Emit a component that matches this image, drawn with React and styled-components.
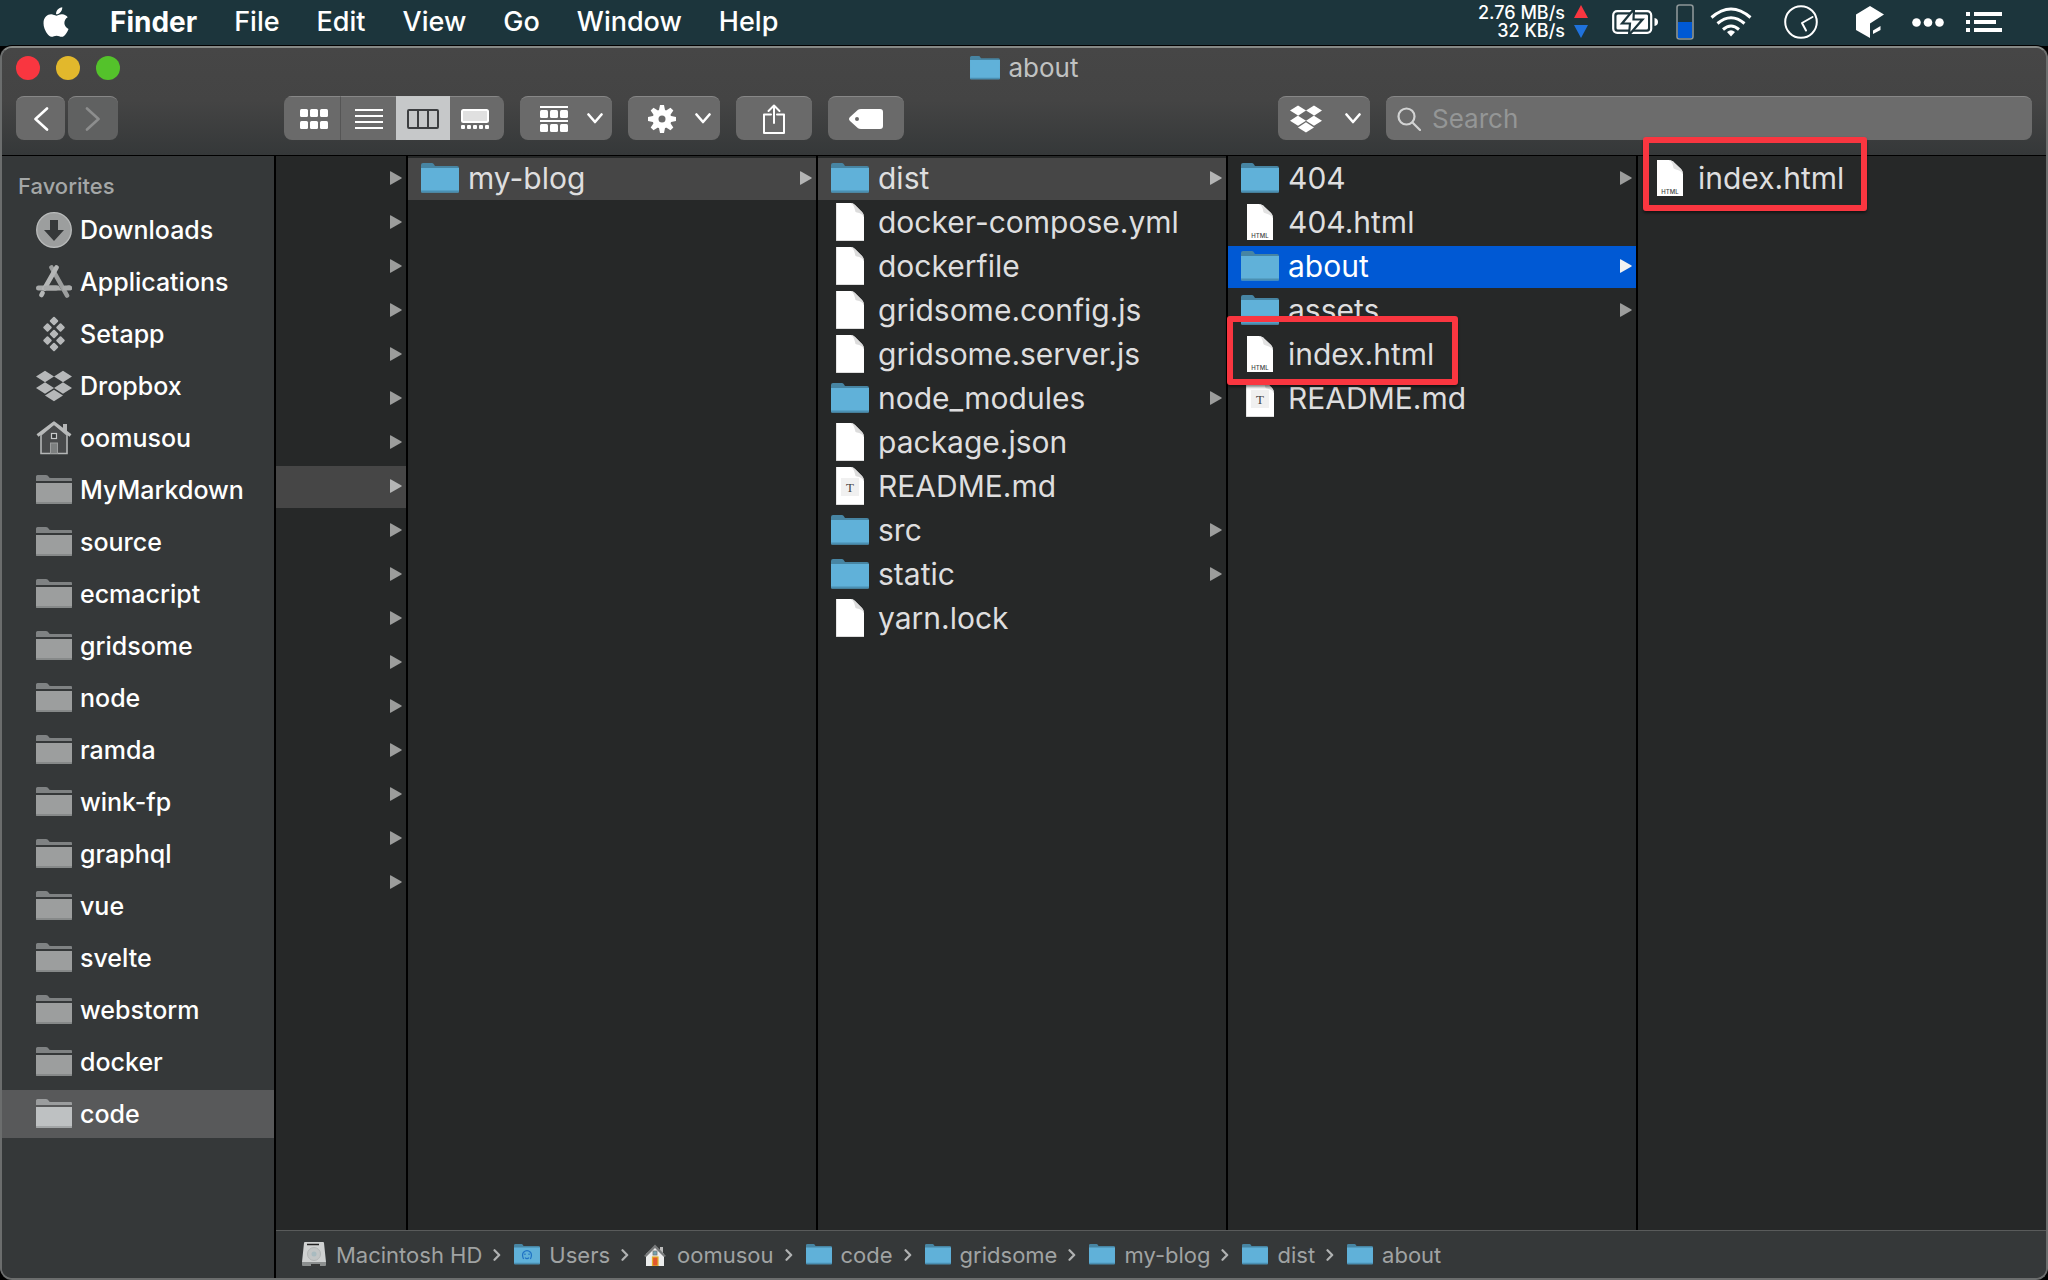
import React from "react";
import styled, { createGlobalStyle } from "styled-components";
import { FaApple, FaDropbox } from "react-icons/fa";

const GlobalStyle = createGlobalStyle`
  *, *::before, *::after { box-sizing: border-box; }
  body {
    margin: 0;
    background: #000;
    color: #fff;
    font-family: Inter, Roboto, "Liberation Sans", sans-serif;
    -webkit-font-smoothing: antialiased;
  }
  ul, ol { margin: 0; padding: 0; list-style: none; }
  button { border: 0; margin: 0; padding: 0; background: none; color: inherit; font: inherit; text-align: left; }
  a { color: inherit; text-decoration: none; }
  svg { display: block; flex: none; }
`;

const Desktop = styled.div`
  display: flex;
  flex-direction: column;
  min-height: 100vh;
`;

/* ---------- menu bar ---------- */

const MenuBar = styled.header`
  display: flex;
  align-items: center;
  justify-content: space-between;
  height: 46px;
  padding: 0 46px 2px 39px;
  background: #1c353c;
`;

const Menus = styled.nav`
  display: flex;
  align-items: center;
  gap: 37px;
`;

const MenuButton = styled.button`
  font-size: ${(p) => (p.$strong ? 28 : 27)}px;
  line-height: 32px;
  font-weight: ${(p) => (p.$strong ? 700 : 500)};
`;

const StatusItems = styled.div`
  display: flex;
  align-items: center;
`;

const StatusIcon = styled.span`
  display: flex;
  margin-left: ${(p) => p.$gap}px;
`;

const NetSpeed = styled.div`
  font-size: 18px;
  line-height: 18px;
  font-weight: 500;
  text-align: right;
`;

/* ---------- window ---------- */

const Window = styled.main`
  flex: 1;
  display: flex;
  flex-direction: column;
  border: 2px solid #6b6d6d;
  border-top-color: #868986;
  border-radius: 12px;
  background: #353839;
  box-shadow: 0 0 0 1px #000;
`;

const TitleArea = styled.div`
  padding: 2px 14px 15px;
  border-bottom: 1px solid #000;
  border-radius: 10px 10px 0 0;
  background: linear-gradient(#464646, #444 50%, #353839);
`;

const TitleRow = styled.div`
  display: grid;
  grid-template-columns: 1fr auto 1fr;
  align-items: center;
  height: 36px;
`;

const Lights = styled.div`
  display: flex;
  gap: 16px;
`;

const Light = styled.button`
  width: 24px;
  height: 24px;
  border-radius: 50%;
  background: ${(p) => p.$color};
`;

const Title = styled.h1`
  display: flex;
  align-items: center;
  gap: 9px;
  margin: 0;
  font-size: 26px;
  line-height: 32px;
  font-weight: 400;
  color: #c0c2c2;
`;

const Toolbar = styled.div`
  display: flex;
  gap: 16px;
  margin-top: 10px;
`;

const NavButtons = styled.div`
  display: flex;
  gap: 3px;
  margin-right: 150px;
`;

const Segments = styled.div`
  display: flex;
  overflow: hidden;
  border-radius: 8px;
`;

const ToolButton = styled.button`
  display: flex;
  align-items: center;
  justify-content: center;
  width: ${(p) => p.$width}px;
  height: 44px;
  border-top: 1px solid #878787;
  border-radius: 8px;
  background: ${(p) => (p.$dim ? "#606161" : "#6a6a6a")};
  color: ${(p) => (p.$dim ? "#8d8e8e" : "#fff")};
`;

const MenuToolButton = styled(ToolButton)`
  justify-content: space-between;
  padding: 0 9px 0 ${(p) => p.$inset}px;
`;

const SegmentButton = styled(ToolButton)`
  border-radius: 0;
  ${(p) => p.$edge === "start" && "padding-left: 4px; border-right: 1px solid #555;"}
  ${(p) => p.$edge === "end" && "padding-right: 4px;"}
  ${(p) => p.$active && "background: #c6c8c9; border-top-color: #c6c8c9;"}
`;

const Spacer = styled.div`
  flex: 1;
`;

const Search = styled.label`
  display: flex;
  align-items: center;
  gap: 11px;
  width: 646px;
  height: 44px;
  padding: 0 11px;
  border-top: 1px solid #878787;
  border-radius: 8px;
  background: #6c6c6c;
`;

const SearchInput = styled.input`
  flex: 1;
  min-width: 0;
  padding: 0;
  border: 0;
  outline: 0;
  background: none;
  color: #fff;
  font: inherit;
  font-size: 26px;
  line-height: 32px;
  &::placeholder { color: #949696; opacity: 1; }
`;

const Body = styled.div`
  flex: 1;
  display: flex;
`;

/* ---------- sidebar ---------- */

const Sidebar = styled.aside`
  width: 274px;
  flex: none;
  padding-top: 16px;
  border-right: 2px solid #000;
  background: #353839;
  border-radius: 0 0 0 10px;
`;

const SidebarHeading = styled.h2`
  margin: 0 0 6px;
  padding-left: 16px;
  font-size: 22px;
  line-height: 28px;
  font-weight: 500;
  color: #a4a7a7;
`;

const SidebarList = styled.ul`
  display: flex;
  flex-direction: column;
  gap: 4px;
`;

const SidebarItem = styled.button`
  display: flex;
  align-items: center;
  gap: 8px;
  width: 100%;
  height: 48px;
  padding-left: 34px;
  font-size: 25px;
  font-weight: 500;
  color: #fff;
  background: ${(p) => (p.$active ? "#58595a" : "transparent")};
`;

/* ---------- column browser ---------- */

const Browser = styled.section`
  flex: 1;
  min-width: 0;
  display: flex;
  flex-direction: column;
`;

const Columns = styled.div`
  flex: 1;
  display: flex;
  background: #262828;
`;

const Column = styled.ul`
  display: flex;
  flex-direction: column;
  gap: 2px;
  padding-top: 2px;
  ${(p) => (p.$width ? `width: ${p.$width}px; flex: none; border-right: 2px solid #000;` : "flex: 1; min-width: 0;")}
`;

const rowColors = { trail: "#464646", selected: "#0059d4" };

const Row = styled.li`
  position: relative;
`;

const RowButton = styled.button`
  display: flex;
  align-items: center;
  gap: 9px;
  width: 100%;
  height: 42px;
  padding: 0 4px 3px 13px;
  font-size: 30px;
  line-height: 38px;
  color: ${(p) => (p.$state === "selected" ? "#fff" : "#dededf")};
  background: ${(p) => rowColors[p.$state] || "transparent"};
`;

const IconSlot = styled.span`
  display: flex;
  justify-content: center;
  width: 38px;
  flex: none;
`;

const RowName = styled.span`
  flex: 1;
`;

/* Red frame drawn over a file to point it out. */
const Highlight = styled.span`
  position: absolute;
  top: ${(p) => p.$top}px;
  left: ${(p) => p.$left}px;
  width: ${(p) => p.$width}px;
  height: ${(p) => p.$height}px;
  border: 6px solid #f93640;
  border-radius: 3px;
  box-shadow: 0 2px 3px rgba(0, 0, 0, 0.5);
  pointer-events: none;
  z-index: 1;
`;

/* ---------- path bar ---------- */

const PathBar = styled.nav`
  height: 48px;
  padding-left: 25px;
  border-top: 1px solid #595b5b;
  background: #353839;
  border-radius: 0 0 10px 0;
`;

const PathList = styled.ol`
  display: flex;
  align-items: center;
  height: 100%;
`;

const PathItem = styled.li`
  display: flex;
  align-items: center;
  gap: 11px;
  margin-right: 13px;
`;

const PathLink = styled.a`
  display: flex;
  align-items: center;
  gap: 9px;
  font-size: 22px;
  line-height: 28px;
  color: #a0a3a3;
`;

const PathIcon = styled.span`
  display: flex;
  justify-content: center;
  width: 26px;
`;

/* ---------- drawings ---------- */

const BlueFolder = ({ width = 38, children }) => (
  <svg width={width} height={width * (30 / 38)} viewBox="0 0 38 30" aria-hidden="true">
    <path d="M0 2Q0 0 2 0H11Q12.500 0 13 1.500L14 3H36Q38 3 38 5V12H0Z" fill="#4785a3" />
    <path d="M0 5H38V28.500Q38 29.500 37 29.500H1Q0 29.500 0 28.500Z" fill="#60b1d9" />
    <path d="M0 27.500H38V28.500Q38 29.500 37 29.500H1Q0 29.500 0 28.500Z" fill="#4a8fb2" />
    {children}
  </svg>
);

const GreyFolder = ({ active }) => (
  <svg width="36" height="30" viewBox="0 0 36 30" aria-hidden="true">
    <path d="M0 1.500Q0 0 1.500 0H10Q12 0 12.500 1.500Q13 3 15 3H35Q36 3 36 4V6H0Z" fill={active ? "#9b9d9e" : "#7f8283"} />
    <path d="M0 8H36V27.500Q36 29 34.500 29H1.500Q0 29 0 27.500Z" fill={active ? "#bec1c2" : "#9c9e9e"} />
    <path d="M0 27H36V27.500Q36 29 34.500 29H1.500Q0 29 0 27.500Z" fill={active ? "#a2a5a6" : "#868989"} />
  </svg>
);

const Doc = ({ mark }) => (
  <svg width="28" height="38" viewBox="0 0 28 38" aria-hidden="true">
    <path d="M0 0H15Q17 0 19 2L26 9Q28 11 28 14V38H0Z" fill="#fff" />
    <path d="M15 0Q17 0 19 2L26 9Q28 11 28 14Q26 10 21 9.500Q19 9.500 19 7Q18 2 15 0Z" fill="#dcdcdc" />
    <path d="M0 37.500H28M.25 0V38" stroke="#bbb" strokeWidth=".5" />
    {mark && (
      <>
        <rect x="5" y="11" width="18" height="18" fill="#f0f0f0" />
        <text x="14" y="25" textAnchor="middle" fontFamily="Liberation Serif, serif" fontSize="13" fill="#444">T</text>
      </>
    )}
  </svg>
);

const HtmlDoc = () => (
  <svg width="26" height="36" viewBox="0 0 26 36" aria-hidden="true">
    <path d="M0 0H12Q14 0 16 1.500L24 9Q26 11 26 14V36H0Z" fill="#fff" />
    <path d="M12 0Q14 0 16 1.500L24 9Q26 11 26 14Q24 10.500 19 9.500Q16 9 16 6Q15.500 2 12 0Z" fill="#e2e2e2" />
    <text x="13" y="34" textAnchor="middle" fontFamily="Inter, sans-serif" fontWeight="500" fontSize="6" fill="#444">HTML</text>
  </svg>
);

const Arrow = ({ color }) => (
  <svg width="12" height="14" viewBox="0 0 12 14" aria-hidden="true">
    <path d="M0 .5Q0 0 1 .4L11.500 6.400Q12 7 11.500 7.600L1 13.600Q0 14 0 13.500Z" fill={color} />
  </svg>
);

const Chevron = () => (
  <svg width="16" height="11" viewBox="0 0 16 11" fill="none" stroke="currentColor" strokeWidth="2.6" strokeLinecap="round" strokeLinejoin="round" aria-hidden="true">
    <path d="M1.500 1.500L8 9L14.500 1.500" />
  </svg>
);

const BackIcon = ({ flip }) => (
  <svg width="16" height="24" viewBox="0 0 16 24" fill="none" stroke="currentColor" strokeWidth="2.6" strokeLinecap="round" strokeLinejoin="round" aria-hidden="true">
    <path d={flip ? "M2 1.500L13.500 12L2 22.500" : "M14 1.500L2.500 12L14 22.500"} />
  </svg>
);

const GridIcon = () => (
  <svg width="28" height="20" viewBox="0 0 28 20" fill="#fff" aria-hidden="true">
    {[0, 12].map((y) => [0, 10, 20].map((x) => <rect key={`${x}-${y}`} x={x} y={y} width="8" height="8" rx="1.500" />))}
  </svg>
);

const ListIcon = () => (
  <svg width="28" height="20" viewBox="0 0 28 20" fill="#fff" aria-hidden="true">
    {[0, 6, 12, 18].map((y) => <rect key={y} y={y} width="28" height="2" />)}
  </svg>
);

const ColumnsIcon = () => (
  <svg width="32" height="20" viewBox="0 0 32 20" fill="none" stroke="#3c3e40" strokeWidth="2" aria-hidden="true">
    <rect x="1" y="1" width="30" height="18" rx="1" />
    <path d="M11 1V19M21 1V19" />
  </svg>
);

const GalleryIcon = () => (
  <svg width="28" height="20" viewBox="0 0 28 20" fill="#fff" aria-hidden="true">
    <rect x="1" y="1" width="26" height="12" rx="1.500" fill="#e0e0e0" stroke="#fff" strokeWidth="2" />
    {[0, 6, 12, 18, 24].map((x) => <rect key={x} x={x} y="16" width="4" height="4" rx="1" />)}
  </svg>
);

const GroupIcon = () => (
  <svg width="28" height="26" viewBox="0 0 28 26" fill="#fff" aria-hidden="true">
    <rect width="28" height="2" />
    <rect y="14" width="28" height="2" />
    {[4, 18].map((y) => [0, 10, 20].map((x) => <rect key={`${x}-${y}`} x={x} y={y} width="8" height="8" rx="1.500" />))}
  </svg>
);

const GearIcon = () => (
  <svg width="28" height="28" viewBox="-14 -14 28 28" aria-hidden="true">
    {[0, 45, 90, 135].map((a) => (
      <path key={a} d="M-2 -14H2L3.200 -8V8L2 14H-2L-3.200 8V-8Z" transform={`rotate(${a})`} fill="#fff" />
    ))}
    <circle r="9.500" fill="#fff" />
    <circle r="3.500" fill="#6a6a6a" />
  </svg>
);

const ShareIcon = () => (
  <svg width="24" height="30" viewBox="0 0 24 30" fill="none" stroke="#fff" strokeWidth="2" strokeLinejoin="round" strokeLinecap="round" aria-hidden="true">
    <path d="M9 10.500H2V29H22V10.500H15M12 19V1.500M6.500 7L12 1.500L17.500 7" />
  </svg>
);

const TagIcon = () => (
  <svg width="34" height="20" viewBox="0 0 34 20" aria-hidden="true">
    <path fillRule="evenodd" d="M9 .8Q10 0 12 0H31Q34 0 34 3V17Q34 20 31 20H12Q10 20 9 19.200L1 12Q-1 10 1 8ZM8 8A2 2 0 1 0 8 12A2 2 0 1 0 8 8Z" fill="#fff" />
  </svg>
);

const SearchIcon = () => (
  <svg width="24" height="24" viewBox="0 0 24 24" fill="none" stroke="#d2d3d3" strokeWidth="2.200" strokeLinecap="round" aria-hidden="true">
    <circle cx="9.500" cy="9.500" r="8" />
    <path d="M15.500 15.500L23 23" />
  </svg>
);

const DownloadsIcon = () => (
  <svg width="36" height="36" viewBox="0 0 36 36" aria-hidden="true">
    <circle cx="18" cy="18" r="17.300" fill="#9c9e9e" stroke="#b9bbbb" strokeWidth="1.300" />
    <path d="M14 8H22V18H28L18 29L8 18H14Z" fill="#353839" />
  </svg>
);

const ApplicationsIcon = () => (
  <svg width="36" height="34" viewBox="0 0 36 34" fill="none" strokeLinecap="round" aria-hidden="true">
    <path d="M2.500 23H33.500" stroke="#a8aaaa" strokeWidth="5" />
    <path d="M16 3L33 30" stroke="#353839" strokeWidth="7.500" strokeLinecap="butt" />
    <path d="M15.500 2.500L31 30.500" stroke="#9c9e9e" strokeWidth="4.600" />
    <path d="M20.500 2.500L8.500 23.500M6.500 28L5.500 30" stroke="#b4b6b6" strokeWidth="4.600" />
    <path d="M10 23H20M29 23H33.500" stroke="#a8aaaa" strokeWidth="5" />
  </svg>
);

const SetappIcon = () => (
  <svg width="36" height="36" viewBox="0 0 36 36" fill="#b6b8b9" aria-hidden="true">
    {[[18, 5], [11.500, 11.500], [24.500, 11.500], [18, 18], [11.500, 24.500], [24.500, 24.500], [18, 31]].map(([x, y]) => (
      <rect key={`${x}-${y}`} x={x - 3.300} y={y - 3.300} width="6.600" height="6.600" rx="1" transform={`rotate(45 ${x} ${y})`} />
    ))}
  </svg>
);

const HomeIcon = () => (
  <svg width="36" height="34" viewBox="0 0 36 34" aria-hidden="true">
    <rect x="27" y="3" width="4" height="9" fill="#b4b6b6" />
    <path d="M5 14L18 3L31 14V32.500H5Z" fill="#484a4b" stroke="#b4b6b6" strokeWidth="1.600" />
    <rect x="14.500" y="22" width="7" height="10.500" fill="#7c7f7f" stroke="#9c9e9e" />
    <rect x="15.500" y="12.500" width="5" height="5" fill="#353839" stroke="#c8caca" strokeWidth="1.200" />
    <path d="M1.500 14.500L18 2L34.500 14.500" fill="none" stroke="#b8baba" strokeWidth="3.200" strokeLinejoin="round" />
  </svg>
);

const DiskIcon = () => (
  <svg width="24" height="25" viewBox="0 0 24 25" aria-hidden="true">
    <path d="M2 1Q2 0 3 0H21Q22 0 22 1L24 20H0Z" fill="#cfd1d1" />
    <path d="M0 20H24V23Q24 24 23 24H1Q0 24 0 23Z" fill="#8c8f8f" />
    <path d="M5 2.500H17" stroke="#222" strokeWidth="1.500" />
    <circle cx="12" cy="12" r="6.500" fill="#c2c5c5" stroke="#b2b5b5" />
    <circle cx="12" cy="12" r="2.500" fill="#a9bbc0" />
    <path d="M9 23H18" stroke="#1c1c1c" strokeWidth="1.500" />
  </svg>
);

const ColorHomeIcon = () => (
  <svg width="22" height="22" viewBox="0 0 22 22" aria-hidden="true">
    <rect x="16" y="3" width="3" height="6" fill="#bbb" />
    <path d="M2 10L11 2L20 10V22H2Z" fill="#eceded" />
    <path d="M0 12L11 .5L22 12L20 13L11 4L2 13Z" fill="#77797a" />
    <rect x="9" y="7" width="4" height="4" fill="#73a3b0" stroke="#777" strokeWidth=".8" />
    <rect x="8.500" y="13" width="5.500" height="9" fill="#e4572e" stroke="#e3b22b" strokeWidth="1.200" />
  </svg>
);

const PathChevron = () => (
  <svg width="8" height="12" viewBox="0 0 8 12" fill="none" stroke="#b0b2b2" strokeWidth="2.200" strokeLinecap="round" strokeLinejoin="round" aria-hidden="true">
    <path d="M1.500 1.200L6.200 6L1.500 10.800" />
  </svg>
);

const NetArrows = () => (
  <svg width="14" height="34" viewBox="0 0 14 34" aria-hidden="true">
    <path d="M7 0L14 13H0Z" fill="#f93640" />
    <path d="M7 33L14 20H0Z" fill="#1f72dc" />
  </svg>
);

const BatteryIcon = () => (
  <svg width="46" height="26" viewBox="0 0 46 26" aria-hidden="true">
    <rect x="1.200" y="2.200" width="38" height="21.600" rx="4" fill="none" stroke="#fff" strokeWidth="2.200" />
    <rect x="4.500" y="5.500" width="31.500" height="15" rx="1.500" fill="#fff" />
    <path d="M42.500 9Q46 9.500 46 13Q46 16.500 42.500 17Z" fill="#fff" />
    <path d="M22 0L10 14.500H18L17 26L30.500 10.500H21.500Z" fill="#fff" stroke="#1c353c" strokeWidth="2.200" />
  </svg>
);

const GaugeIcon = () => (
  <svg width="18" height="36" viewBox="0 0 18 36" aria-hidden="true">
    <rect x="1" y="1" width="16" height="34" rx="2.500" fill="#1c353c" stroke="#8d9698" strokeWidth="1.600" />
    <rect x="2" y="18" width="14" height="16" fill="#0059d4" />
  </svg>
);

const WifiIcon = () => (
  <svg width="42" height="30" viewBox="0 0 42 30" fill="none" stroke="#fff" strokeWidth="3" aria-hidden="true">
    <path d="M1.500 10.500Q21 -6.500 40.500 10.500M7.500 16.500Q21 5 34.500 16.500M13 22.500Q21 15.500 29 22.500" />
    <path d="M21 29.500L17 25Q21 21.500 25 25Z" fill="#fff" stroke="none" />
  </svg>
);

const ClockIcon = () => (
  <svg width="34" height="34" viewBox="0 0 34 34" fill="none" stroke="#fff" strokeWidth="2" strokeLinecap="round" aria-hidden="true">
    <circle cx="17" cy="17" r="15.800" />
    <path d="M28.500 12L18 18L22 25.500" strokeLinejoin="round" />
  </svg>
);

const CubeIcon = () => (
  <svg width="28" height="32" viewBox="0 0 28 32" fill="#fff" aria-hidden="true">
    <path d="M14 0L28 8.500L14 17.500V32L0 24V8.500Z" />
    <path d="M17 24.500L24.500 20V24L17 28Z" />
  </svg>
);

const DotsIcon = () => (
  <svg width="32" height="9" viewBox="0 0 32 9" fill="#fff" aria-hidden="true">
    <circle cx="4.500" cy="4.500" r="4.300" />
    <circle cx="16" cy="4.500" r="4.300" />
    <circle cx="27.500" cy="4.500" r="4.300" />
  </svg>
);

const NotificationIcon = () => (
  <svg width="36" height="20" viewBox="0 0 36 20" fill="#fff" aria-hidden="true">
    <path d="M0 0H4V4H0ZM8 0H36V4H8ZM0 8H4V12H0ZM8 8H30V12H8ZM0 16H4V20H0ZM8 16H36V20H8Z" />
  </svg>
);

/* ---------- data ---------- */

const menus = ["Finder", "File", "Edit", "View", "Go", "Window", "Help"];

const favorites = [
  ["Downloads", <DownloadsIcon />],
  ["Applications", <ApplicationsIcon />],
  ["Setapp", <SetappIcon />],
  ["Dropbox", <FaDropbox size={36} color="#b6b8b9" />],
  ["oomusou", <HomeIcon />],
  ...["MyMarkdown", "source", "ecmacript", "gridsome", "node", "ramda", "wink-fp", "graphql", "vue", "svelte", "webstorm", "docker", "code"].map((n) => [n]),
];

const columns = [
  { width: 132, rows: Array.from({ length: 17 }, (_, i) => ({ kind: "hidden", open: true, state: i === 7 ? "trail" : undefined })) },
  { width: 410, rows: [{ name: "my-blog", kind: "folder", state: "trail" }] },
  {
    width: 410,
    rows: [
      { name: "dist", kind: "folder", state: "trail" },
      { name: "docker-compose.yml", kind: "doc" },
      { name: "dockerfile", kind: "doc" },
      { name: "gridsome.config.js", kind: "doc" },
      { name: "gridsome.server.js", kind: "doc" },
      { name: "node_modules", kind: "folder" },
      { name: "package.json", kind: "doc" },
      { name: "README.md", kind: "markdown" },
      { name: "src", kind: "folder" },
      { name: "static", kind: "folder" },
      { name: "yarn.lock", kind: "doc" },
    ],
  },
  {
    width: 410,
    rows: [
      { name: "404", kind: "folder" },
      { name: "404.html", kind: "html" },
      { name: "about", kind: "folder", state: "selected" },
      { name: "assets", kind: "folder" },
      { name: "index.html", kind: "html", frame: { top: -18, left: -1, width: 231, height: 69 } },
      { name: "README.md", kind: "markdown" },
    ],
  },
  { rows: [{ name: "index.html", kind: "html", frame: { top: -21, left: 5, width: 224, height: 74 } }] },
];

const fileIcons = {
  folder: <BlueFolder />,
  doc: <Doc />,
  markdown: <Doc mark />,
  html: <HtmlDoc />,
};

const UsersFolder = () => (
  <BlueFolder width={26}>
    <path d="M14 22Q11 16 14 12Q19 7 24 12Q27 16 24 22M16 20Q19 23 22 20M16 14V16M22 14V16" fill="none" stroke="#1f72c4" strokeWidth="1.800" />
  </BlueFolder>
);

const path = [
  ["Macintosh HD", <DiskIcon />],
  ["Users", <UsersFolder />],
  ["oomusou", <ColorHomeIcon />],
  ...["code", "gridsome", "my-blog", "dist", "about"].map((n) => [n, <BlueFolder width={26} />]),
];

const arrowColor = (state) => (state === "selected" ? "#f2f2f2" : state === "trail" ? "#b4b5b5" : "#9c9d9c");

function FileRow({ name, kind, state, frame }) {
  const isFolder = kind === "folder" || kind === "hidden";
  return (
    <Row>
      <RowButton $state={state} aria-label={name || "Folder"}>
        {kind !== "hidden" && <IconSlot>{fileIcons[kind]}</IconSlot>}
        <RowName>{name}</RowName>
        {isFolder && <Arrow color={arrowColor(state)} />}
      </RowButton>
      {frame && <Highlight $top={frame.top} $left={frame.left} $width={frame.width} $height={frame.height} />}
    </Row>
  );
}

export default function App() {
  return (
    <Desktop>
      <GlobalStyle />
      <MenuBar>
        <Menus>
          <MenuButton aria-label="Apple menu"><FaApple size={34} /></MenuButton>
          {menus.map((m) => <MenuButton key={m} $strong={m === "Finder"}>{m}</MenuButton>)}
        </Menus>
        <StatusItems>
          <NetSpeed>
            <div>2.76 MB/s</div>
            <div>32 KB/s</div>
          </NetSpeed>
          <StatusIcon $gap={9}><NetArrows /></StatusIcon>
          <StatusIcon $gap={24}><BatteryIcon /></StatusIcon>
          <StatusIcon $gap={18}><GaugeIcon /></StatusIcon>
          <StatusIcon $gap={16}><WifiIcon /></StatusIcon>
          <StatusIcon $gap={32}><ClockIcon /></StatusIcon>
          <StatusIcon $gap={38}><CubeIcon /></StatusIcon>
          <StatusIcon $gap={28}><DotsIcon /></StatusIcon>
          <StatusIcon $gap={22}><NotificationIcon /></StatusIcon>
        </StatusItems>
      </MenuBar>

      <Window>
        <TitleArea>
          <TitleRow>
            <Lights>
              <Light $color="#f93640" aria-label="Close" />
              <Light $color="#e2b82c" aria-label="Minimize" />
              <Light $color="#54c22b" aria-label="Zoom" />
            </Lights>
            <Title><BlueFolder width={30} />about</Title>
          </TitleRow>
          <Toolbar>
            <NavButtons>
              <ToolButton $width={49} aria-label="Back"><BackIcon /></ToolButton>
              <ToolButton $width={50} $dim aria-label="Forward"><BackIcon flip /></ToolButton>
            </NavButtons>
            <Segments>
              <SegmentButton $width={57} $edge="start" aria-label="Icon view"><GridIcon /></SegmentButton>
              <SegmentButton $width={55} aria-label="List view"><ListIcon /></SegmentButton>
              <SegmentButton $width={54} $active aria-label="Column view"><ColumnsIcon /></SegmentButton>
              <SegmentButton $width={54} $edge="end" aria-label="Gallery view"><GalleryIcon /></SegmentButton>
            </Segments>
            <MenuToolButton $width={92} $inset={20} aria-label="Group"><GroupIcon /><Chevron /></MenuToolButton>
            <MenuToolButton $width={92} $inset={20} aria-label="Actions"><GearIcon /><Chevron /></MenuToolButton>
            <ToolButton $width={76} aria-label="Share"><ShareIcon /></ToolButton>
            <ToolButton $width={76} aria-label="Tags"><TagIcon /></ToolButton>
            <Spacer />
            <MenuToolButton $width={92} $inset={12} aria-label="Dropbox"><FaDropbox size={32} /><Chevron /></MenuToolButton>
            <Search>
              <SearchIcon />
              <SearchInput type="search" placeholder="Search" aria-label="Search" />
            </Search>
          </Toolbar>
        </TitleArea>

        <Body>
          <Sidebar>
            <SidebarHeading>Favorites</SidebarHeading>
            <SidebarList>
              {favorites.map(([name, icon]) => (
                <li key={name}>
                  <SidebarItem $active={name === "code"}>
                    {icon || <GreyFolder active={name === "code"} />}
                    {name}
                  </SidebarItem>
                </li>
              ))}
            </SidebarList>
          </Sidebar>
          <Browser>
            <Columns>
              {columns.map((c, i) => (
                <Column key={i} $width={c.width}>
                  {c.rows.map((r, j) => <FileRow key={j} {...r} />)}
                </Column>
              ))}
            </Columns>
            <PathBar aria-label="Path">
              <PathList>
                {path.map(([name, icon], i) => (
                  <PathItem key={name}>
                    <PathLink href="#"><PathIcon>{icon}</PathIcon>{name}</PathLink>
                    {i < path.length - 1 && <PathChevron />}
                  </PathItem>
                ))}
              </PathList>
            </PathBar>
          </Browser>
        </Body>
      </Window>
    </Desktop>
  );
}
